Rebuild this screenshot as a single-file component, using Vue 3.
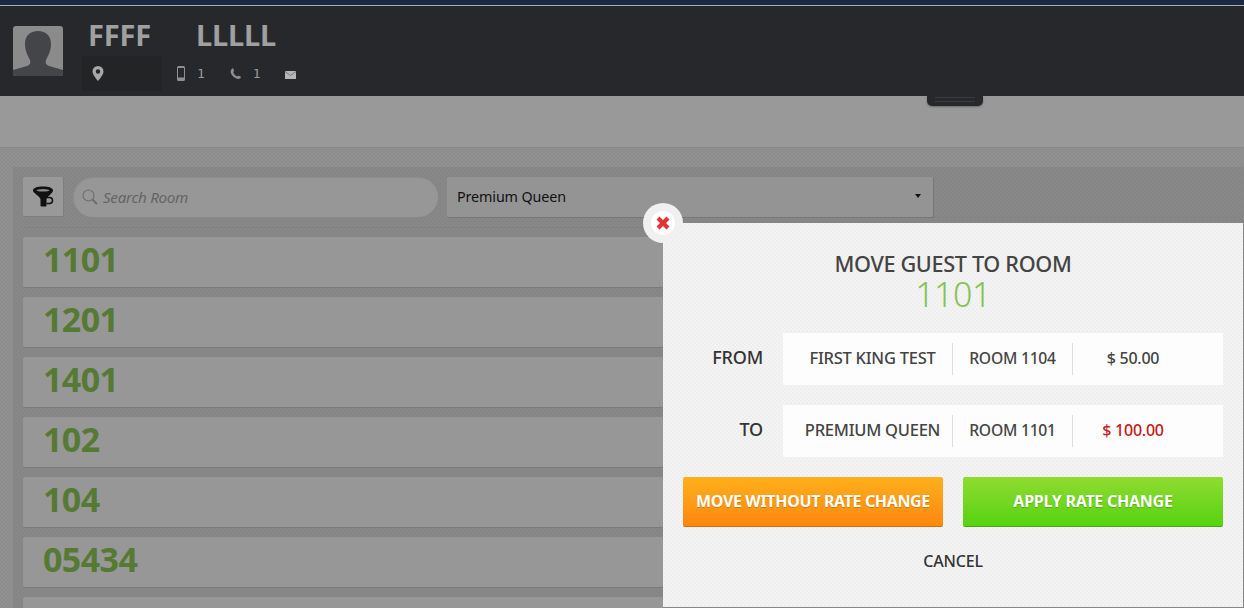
<script setup>
const rooms = ['1101', '1201', '1401', '102', '104', '05434', '']
const rows = [
  { label: 'FROM', type: 'FIRST KING TEST', room: 'ROOM 1104', rate: '$ 50.00', up: false },
  { label: 'TO', type: 'PREMIUM QUEEN', room: 'ROOM 1101', rate: '$ 100.00', up: true },
]
</script>

<template>
  <div class="page">
    <div class="strip"></div>
    <header class="header">
      <div class="avatar">
        <svg width="50" height="50" viewBox="0 0 50 50">
          <rect width="50" height="50" rx="3" fill="#8b8b8b" />
          <path d="M25 5c-8 0-13 5-13 13 0 7 3 12 5 16 1 3 0 5-3 6l-14 4v3q0 3 3 3h44q3 0 3-3v-3l-14-4c-3-1-4-3-3-6 2-4 5-9 5-16 0-8-5-13-13-13z" fill="#434548" />
        </svg>
      </div>
      <div class="guest">
        <div class="names"><span class="first">FFFF</span><span>LLLLL</span></div>
        <div class="contact">
          <div class="address">
            <svg width="12" height="15" viewBox="0 0 12 15"><path fill-rule="evenodd" d="M6 0a5.500 5.500 0 0 0-5.500 5.500C.5 9 6 15 6 15s5.500-6 5.500-9.500A5.500 5.500 0 0 0 6 0zm0 3.300a2.200 2.200 0 1 1 0 4.400 2.200 2.200 0 0 1 0-4.400z" fill="#a8a8a8"/></svg>
          </div>
          <svg class="phone" width="8" height="15" viewBox="0 0 8 15"><path fill-rule="evenodd" d="M1.500 0h5Q8 0 8 1.500v12Q8 15 6.500 15h-5Q0 15 0 13.500v-12Q0 0 1.500 0zM1 2v9.500h6V2z" fill="#8f8f8f"/></svg>
          <span class="num">1</span>
          <svg class="tel" width="11" height="11" viewBox="0 0 11 11"><path d="M3 0C1 1 0 3 1 5.500S5 10.500 8 11c1.500 0 3-1 3-2L8.500 7.500 7.300 8.500C5.500 8 3.500 5.500 3.200 4L4.200 3z" fill="#8f8f8f"/></svg>
          <span class="num">1</span>
          <svg class="mail" width="11" height="8" viewBox="0 0 11 8"><rect width="11" height="8" fill="#b5b5b5"/><path d="M0 .5l5.500 4 5.500-4" fill="none" stroke="#77797b" stroke-width="1"/></svg>
        </div>
      </div>
      <div class="tab"><i></i><i></i></div>
    </header>

    <div class="subbar"></div>

    <main class="content">
      <section class="panel">
        <div class="toolbar">
          <button class="filter">
            <svg width="22" height="22" viewBox="0 0 22 22">
              <path d="M1 4.500C1 2 5 .5 11 .5S21 2 21 4.500C21 7 16 9.500 14.500 13v6.500q0 1-1 1h-4q-1 0-1-1V13C7 9.500 1 7 1 4.500z" fill="#111"/>
              <ellipse cx="11" cy="4.300" rx="6.500" ry="1.300" fill="#8a8a8a"/>
              <path d="M14.500 11.500h3q3 0 3 3t-3 3h-3" fill="none" stroke="#111" stroke-width="1.500"/>
            </svg>
          </button>
          <div class="search">
            <svg width="16" height="16" viewBox="0 0 16 16"><circle cx="6.500" cy="6.500" r="5.500" fill="none" stroke="#6d6d6d" stroke-width="1.100"/><path d="M10.500 10.500l4.500 4.500" stroke="#6d6d6d" stroke-width="1.800"/></svg>
            <span>Search Room</span>
          </div>
          <div class="select"><span>Premium Queen</span><b></b></div>
        </div>
        <div class="rule"></div>
        <div v-for="(room, i) in rooms" :key="i" class="room">{{ room }}</div>
      </section>
    </main>

    <div class="modal">
      <div class="close">
        <span>
          <svg width="14" height="14" viewBox="0 0 14 14"><path d="M.5 3.500l3-3L7 4l3.500-3.500 3 3L10 7l3.500 3.500-3 3L7 10l-3.500 3.500-3-3L4 7z" fill="#e23636"/></svg>
        </span>
      </div>
      <h2>MOVE GUEST TO ROOM</h2>
      <div class="target">1101</div>
      <div v-for="row in rows" :key="row.label" class="line">
        <div class="label">{{ row.label }}</div>
        <div class="card">
          <div class="c1">{{ row.type }}</div>
          <div class="c2">{{ row.room }}</div>
          <div class="c3" :class="{ up: row.up }">{{ row.rate }}</div>
        </div>
      </div>
      <div class="actions">
        <button class="btn orange">MOVE WITHOUT RATE CHANGE</button>
        <button class="btn green">APPLY RATE CHANGE</button>
      </div>
      <div class="cancel">CANCEL</div>
    </div>
  </div>
</template>

<style>
html, body { margin: 0; overflow: hidden; background: #8f8f8f; }
</style>

<style scoped>
.page {
  position: relative;
  width: 1244px;
  height: 608px;
  overflow: hidden;
  font-family: "Noto Sans", "Open Sans", sans-serif;
  display: flex;
  flex-direction: column;
}
.strip { height: 5px; background: #1a2942; border-bottom: 1px solid #a9abad; flex: none; }
.header {
  position: relative;
  height: 90px;
  flex: none;
  background: #26282b;
  display: flex;
  padding: 20px 0 0 13px;
  box-sizing: border-box;
}
.avatar { width: 50px; height: 50px; flex: none; }
.guest { margin-left: 19px; }
.names {
  height: 36px;
  margin: -9px 0 0 6px;
  display: flex;
  font-size: 29px;
  line-height: 36px;
  font-weight: 700;
  color: #a0a0a0;
  letter-spacing: -0.2px;
}
.first { width: 108px; }
.contact { display: flex; align-items: center; height: 35px; margin-top: 3px; }
.address { width: 80px; height: 35px; background: #222426; display: flex; padding: 10px 0 0 10px; box-sizing: border-box; }
.phone { margin-left: 15px; }
.num { font: 13px/15px "DejaVu Sans Mono", monospace; color: #9a9a9a; margin-left: 12px; }
.tel { margin-left: 25px; }
.tel + .num { margin-left: 12px; }
.mail { margin-left: 24px; margin-top: 3px; }
.tab {
  position: absolute;
  left: 927px;
  top: 90px;
  width: 56px;
  height: 10px;
  background: #26282b;
  border-radius: 0 0 5px 5px;
  box-shadow: 0 1px 2px rgba(0, 0, 0, .3);
  box-sizing: border-box;
  padding: 1px 8px 0;
}
.tab i { display: block; height: 1px; background: #3a3c3f; margin-bottom: 3px; }
.subbar { height: 51px; flex: none; background: #999; border-bottom: 1px solid #888; }
.content {
  flex: 1;
  padding: 19px 0 0 13px;
  background-color: #919191;
  background-image: radial-gradient(rgba(0, 0, 0, .035) 1px, transparent 1px), radial-gradient(rgba(0, 0, 0, .035) 1px, transparent 1px);
  background-size: 4px 4px;
  background-position: 0 0, 2px 2px;
}
.panel {
  background-color: #888;
  background-image: radial-gradient(rgba(0, 0, 0, .02) 1px, transparent 1px), radial-gradient(rgba(0, 0, 0, .02) 1px, transparent 1px);
  background-size: 4px 4px;
  background-position: 0 0, 2px 2px;
  padding: 10px 10px 0;
  height: 500px;
}
.toolbar { display: flex; height: 40px; }
.filter {
  width: 41px;
  height: 40px;
  padding: 0;
  border: 0;
  border-right: 1px solid #7e7e7e;
  border-bottom: 1px solid #7e7e7e;
  border-radius: 2px;
  background: #999;
  display: flex;
  align-items: center;
  justify-content: center;
}
.search {
  width: 365px;
  height: 40px;
  margin-left: 9px;
  background: #979797;
  border-radius: 20px;
  display: flex;
  align-items: center;
  padding-left: 9px;
  box-sizing: border-box;
  box-shadow: inset 1px 1px 1px rgba(0, 0, 0, .06);
}
.search span {
  margin-left: 5px;
  font-size: 15.2px;
  font-style: italic;
  color: #656565;
  letter-spacing: -0.3px;
}
.select {
  width: 487px;
  height: 41px;
  margin-left: 9px;
  background: #949494;
  border-right: 1px solid #777;
  border-bottom: 1px solid #777;
  border-radius: 2px;
  box-sizing: border-box;
  display: flex;
  align-items: center;
  justify-content: space-between;
  padding: 0 12px 2px 10px;
  font-size: 14.3px;
  color: #111;
  letter-spacing: -0.1px;
}
.select b { width: 0; height: 0; border: 3px solid transparent; border-top: 4px solid #111; border-bottom: 0; }
.rule { height: 1px; background: #828282; margin-top: 10px; margin-bottom: 9px; width: 640px; }
.room {
  height: 51px;
  width: 640px;
  margin-bottom: 9px;
  background: #979797;
  border-bottom: 1px solid #7a7a7a;
  border-radius: 2px;
  box-sizing: border-box;
  padding-left: 20px;
  font-size: 34px;
  line-height: 45px;
  font-weight: 700;
  color: #567a34;
  letter-spacing: -0.6px;
}
.modal {
  position: absolute;
  left: 663px;
  top: 223px;
  width: 580px;
  height: 384px;
  background-color: #f4f4f4;
  background-image: radial-gradient(rgba(0, 0, 0, .025) 1px, transparent 1px), radial-gradient(rgba(0, 0, 0, .025) 1px, transparent 1px);
  background-size: 4px 4px;
  background-position: 0 0, 2px 2px;
  box-sizing: border-box;
  padding: 25px 20px 0;
  color: #444;
  text-align: center;
}
.close {
  position: absolute;
  left: -20px;
  top: -20px;
  width: 40px;
  height: 40px;
  border-radius: 50%;
  background: #f0f0f0;
  display: flex;
  align-items: center;
  justify-content: center;
}
.close span {
  width: 24px;
  height: 24px;
  border-radius: 50%;
  background: #fff;
  display: flex;
  align-items: center;
  justify-content: center;
}
h2 {
  margin: 0;
  font-size: 21.7px;
  line-height: 32px;
  font-weight: 500;
  color: #444;
  letter-spacing: -0.35px;
}
.target {
  font-size: 34px;
  line-height: 28px;
  font-weight: 300;
  color: #85c158;
  letter-spacing: -0.5px;
}
.line { display: flex; height: 52px; margin-top: 20px; }
.target + .line { margin-top: 25px; }
.label {
  width: 80px;
  text-align: right;
  font-size: 18px;
  font-weight: 500;
  line-height: 49px;
  color: #333;
  letter-spacing: -0.2px;
}
.card {
  margin-left: 20px;
  width: 440px;
  background: #fdfdfd;
  display: flex;
  align-items: center;
  font-size: 15.7px;
  font-weight: 500;
  color: #444;
  letter-spacing: -0.25px;
}
.card > div { height: 32px; line-height: 30px; box-sizing: border-box; }
.c1 { width: 170px; padding-left: 10px; border-right: 1px solid #ddd; font-size: 16.5px; }
.c2 { width: 120px; border-right: 1px solid #ddd; }
.c3 { width: 120px; font-size: 16px; }
.c3.up { color: #c31a1a; }
.actions { display: flex; justify-content: space-between; margin-top: 20px; }
.btn {
  width: 260px;
  height: 50px;
  padding: 0 0 2px;
  border: 0;
  border-radius: 2px;
  font-family: inherit;
  font-size: 16px;
  font-weight: 700;
  color: #fff;
  letter-spacing: -0.35px;
  text-shadow: 0 1px 1px rgba(0, 0, 0, .2);
}
.green { letter-spacing: -0.25px; }
.orange { background: linear-gradient(#ffb01c, #ff870f); border-bottom: 1px solid #d87008; }
.green { background: linear-gradient(#90db30, #56d310); border-bottom: 1px solid #42a80c; }
.cancel {
  margin-top: 21px;
  font-size: 16px;
  line-height: 26px;
  font-weight: 500;
  color: #333;
  letter-spacing: -0.2px;
}
</style>
